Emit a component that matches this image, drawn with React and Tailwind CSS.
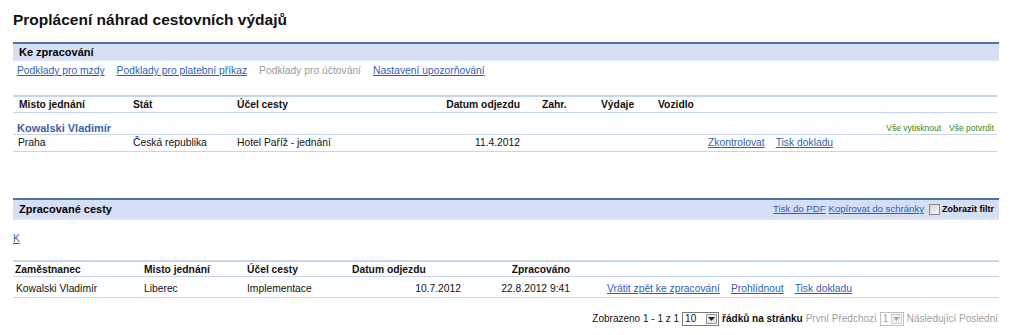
import React from "react";

const F = { fontFamily: '"Liberation Sans", Arial, sans-serif' };
const link = "text-[#2f5fb3] underline";

function Bar({ title, right, h }) {
  return (
    <div className={`flex items-center justify-between ${h} bg-[#d5def3] border-t-[2px] border-[#4f74a3] border-b border-b-[#dfe6f5] pl-[6px] pr-[5px]`}>
      <span className="font-bold text-[11px] text-black">{title}</span>
      {right}
    </div>
  );
}

const rowLine = "border-b border-[#c5d5ee]";
const cols1 = "grid grid-cols-[114px_104px_199px_96px_69px_57px_50px_1fr]";
const cols2 = "grid grid-cols-[128px_103px_105px_118px_109px_1fr]";

export default function App() {
  return (
    <div style={F} className="w-[1024px] h-[335px] bg-white text-[10.3px] text-[#111] overflow-hidden">
      <div className="pl-[13px] pr-[25px] pt-[10px]">
        <h1 className="text-[15.5px] font-bold leading-[20px] h-[32px]">Proplácení náhrad cestovních výdajů</h1>

        <Bar title="Ke zpracování" h="h-[19px]" />
        <div className="flex gap-[12px] pl-[4px] h-[20px] items-center">
          <span className={link}>Podklady pro mzdy</span>
          <span className={link}>Podklady pro platební příkaz</span>
          <span className="text-[#9a9a9a]">Podklady pro účtování</span>
          <span className={link}>Nastavení upozorňování</span>
        </div>

        <div className="mt-[14px] w-[984px]">
          <div className="border-t-[2px] border-[#c5d5ee]" />
          <div className={`${cols1} h-[16px] items-center font-bold ${rowLine}`}>
            <span className="pl-[6px]">Misto jednání</span>
            <span className="pl-[6px]">Stát</span>
            <span className="pl-[6px]">Účel cesty</span>
            <span className="pr-[6px] text-right">Datum odjezdu</span>
            <span className="pl-[16px]">Zahr.</span>
            <span className="pl-[6px]">Výdaje</span>
            <span className="pl-[6px]">Vozidlo</span>
            <span />
          </div>
          <div className={`flex justify-between items-end h-[22px] ${rowLine}`}>
            <span className="pl-[4px] font-bold text-[11px] leading-[12px] text-[#3c5fb0]">Kowalski Vladimír</span>
            <span className="flex gap-[8px] text-[8.5px] leading-[10px] text-[#2a8a2a] pr-[3px] pb-[1px]">
              <span>Vše vytisknout</span>
              <span>Vše potvrdit</span>
            </span>
          </div>
          <div className={`${cols1} h-[17px] items-center ${rowLine}`}>
            <span className="pl-[5px]">Praha</span>
            <span className="pl-[6px]">Česká republika</span>
            <span className="pl-[6px]">Hotel Paříž - jednání</span>
            <span className="pr-[6px] text-right">11.4.2012</span>
            <span />
            <span />
            <span />
            <span className="pl-[6px] flex gap-[11px]">
              <span className={link}>Zkontrolovat</span>
              <span className={link}>Tisk dokladu</span>
            </span>
          </div>
        </div>

        <div className="mt-[46px]">
          <Bar
            title="Zpracované cesty"
            h="h-[22px]"
            right={
              <span className="flex items-center gap-[3px] text-[9.6px]">
                <span className={link}>Tisk do PDF</span>
                <span className={link}>Kopírovat do schránky</span>
                <span className="flex items-center gap-[2px] font-bold text-[9px] text-black ml-[2px]">
                  <span className="inline-block w-[11px] h-[11px] border border-[#8a8a8a] bg-gradient-to-br from-[#d6d6d6] to-[#f6f6f6]" />
                  Zobrazit filtr
                </span>
              </span>
            }
          />
        </div>
        <div className="h-[40px] pt-[11px]">
          <span className={link}>K</span>
        </div>

        <div className="w-[986px]">
          <div className="border-t-[2px] border-[#c5d5ee]" />
          <div className={`${cols2} h-[15px] items-center font-bold ${rowLine}`}>
            <span className="pl-[2px]">Zaměstnanec</span>
            <span className="pl-[3px]">Misto jednání</span>
            <span className="pl-[3px]">Účel cesty</span>
            <span className="pl-[3px]">Datum odjezdu</span>
            <span className="pr-[6px] text-right">Zpracováno</span>
            <span />
          </div>
          <div className={`${cols2} h-[21px] items-center pt-[3px] ${rowLine}`}>
            <span className="pl-[3px]">Kowalski Vladimír</span>
            <span className="pl-[3px]">Liberec</span>
            <span className="pl-[3px]">Implementace</span>
            <span className="pr-[6px] text-right">10.7.2012</span>
            <span className="pr-[6px] text-right">22.8.2012 9:41</span>
            <span className="pl-[31px] flex gap-[11px]">
              <span className={link}>Vrátit zpět ke zpracování</span>
              <span className={link}>Prohlídnout</span>
              <span className={link}>Tisk dokladu</span>
            </span>
          </div>
        </div>

        <div className="flex justify-end items-center gap-[3px] mt-[13px] w-[985px] text-[10px]">
          <span>Zobrazeno 1 - 1 z 1</span>
          <span className="flex items-center h-[14px] w-[37px] border border-[#7a7a7a] bg-white">
            <span className="flex-1 pl-[2px] text-[10px]">10</span>
            <span className="w-[11px] h-[10px] mr-[1px] flex items-center justify-center border border-[#9a9a9a] bg-[#e8e8e8]">
              <svg width="7" height="4" viewBox="0 0 7 4"><path d="M0 0h7L3.5 4z" fill="#222" /></svg>
            </span>
          </span>
          <span className="font-bold">řádků na stránku</span>
          <span className="text-[#a0a0a0]">První Předchozí</span>
          <span className="flex items-center h-[14px] w-[24px] border border-[#bdbdbd] bg-white">
            <span className="flex-1 pl-[2px] text-[#a0a0a0]">1</span>
            <span className="w-[11px] h-[10px] mr-[1px] flex items-center justify-center border border-[#cfcfcf] bg-[#f0f0f0]">
              <svg width="7" height="4" viewBox="0 0 7 4"><path d="M0 0h7L3.5 4z" fill="#aaa" /></svg>
            </span>
          </span>
          <span className="text-[#a0a0a0]">Následující Poslední</span>
        </div>
      </div>
    </div>
  );
}
